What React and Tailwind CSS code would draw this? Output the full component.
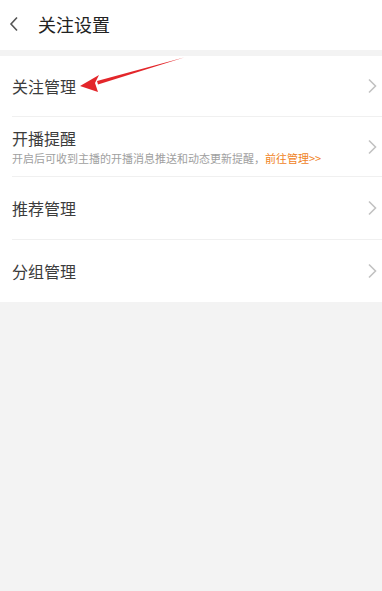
function Chevron() {
  return (
    <svg width="10" height="16" viewBox="0 0 10 16" className="shrink-0">
      <path d="M2 1.5 L8.5 8 L2 14.5" fill="none" stroke="#c2c2c2" strokeWidth="1.6" />
    </svg>
  );
}

function Row({ title, sub, last, h }) {
  return (
    <div className="pl-3 bg-white">
      <div
        className={
          h + " flex items-center justify-between pr-[5px] " +
          (last ? "" : "border-b border-[#f0f0f0]")
        }
      >
        <div className="flex flex-col">
          <span className="text-[16px] leading-[20px] text-[#3c3c3c]">{title}</span>
          {sub && (
            <span className="text-[11px] leading-[14px] text-[#a0a0a0] mt-[3px] whitespace-nowrap">
              开启后可收到主播的开播消息推送和动态更新提醒，
              <span className="text-[#f0831e]">前往管理&gt;&gt;</span>
            </span>
          )}
        </div>
        <Chevron />
      </div>
    </div>
  );
}

export default function App() {
  return (
    <div
      className="relative w-[382px] h-[591px] bg-[#f3f3f3] overflow-hidden"
      style={{ fontFamily: '"Noto Sans CJK SC", "Noto Sans", sans-serif' }}
    >
      <div className="h-[50px] bg-white flex items-center">
        <svg width="10" height="16" viewBox="0 0 10 16" className="ml-[9px] -mt-[2px]">
          <path d="M8 1.5 L2 8 L8 14.5" fill="none" stroke="#555" strokeWidth="1.6" />
        </svg>
        <span className="ml-[19px] text-[18px] text-[#222] -mt-[1px]">关注设置</span>
      </div>
      <div className="h-[6px]" />
      <Row title="关注管理" h="h-[61px]" />
      <Row title="开播提醒" sub h="h-[60px]" />
      <Row title="推荐管理" h="h-[63px]" />
      <Row title="分组管理" last h="h-[62px]" />

      <svg className="absolute left-0 top-0 pointer-events-none" width="382" height="120">
        <polygon points="184,57.5 97,81 98,84.5" fill="#e3262a" />
        <polygon points="80,86 99,75 95,83 98,92" fill="#e3262a" />
      </svg>
    </div>
  );
}
